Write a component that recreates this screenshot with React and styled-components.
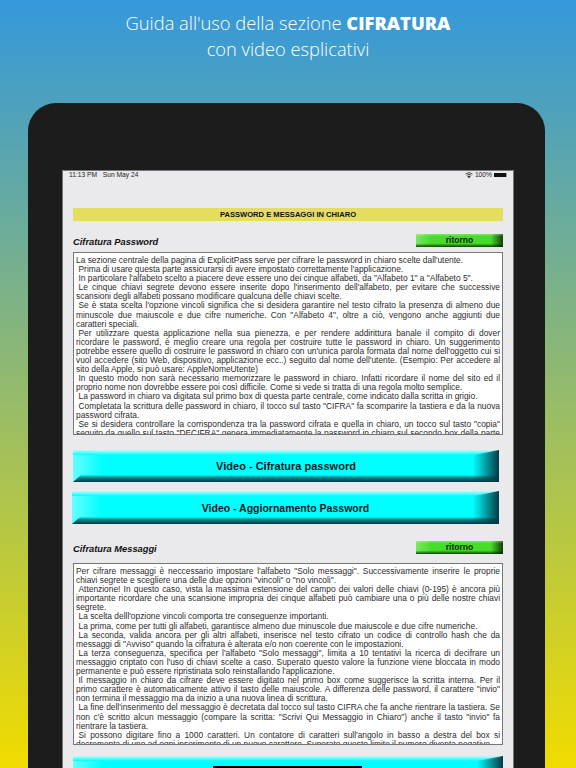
import React from 'react'
import styled, { createGlobalStyle } from 'styled-components'

const Global = createGlobalStyle`
  html, body { margin: 0; padding: 0; }
  body { font-family: "Liberation Sans", Arial, sans-serif; }
`
const Page = styled.div`
  position: relative;
  width: 576px;
  height: 768px;
  overflow: hidden;
  display: flex;
  flex-direction: column;
  background: linear-gradient(to bottom, #3498db 0%, #f1dc00 100%);
`
const Headline = styled.h1`
  margin: 0;
  padding-top: 10px;
  height: 103px;
  box-sizing: border-box;
  text-align: center;
  color: #fff;
  font-family: "Open Sans", sans-serif;
  font-weight: 300;
  font-size: 18.3px;
  line-height: 26px;
  b { font-weight: 800; }
`
const Device = styled.div`
  flex: 1;
  min-height: 0;
  margin: 0 31px 0 28px;
  padding: 67px 31px 0 34px;
  background: #1c1c1c;
  border-radius: 28px 28px 0 0;
`
const Screen = styled.div`
  height: 100%;
  box-sizing: border-box;
  background: #eaeaec;
  border: 1px solid #77777a;
  border-bottom: 0;
  padding: 0 10px 0 10px;
  overflow: hidden;
`
const StatusBar = styled.div`
  display: flex;
  justify-content: space-between;
  align-items: center;
  height: 7px;
  margin: 0 -4px 0 -4px;
  font-size: 6.7px;
  color: #222;
`
const StatusRight = styled.div`
  display: flex;
  align-items: center;
  gap: 2px;
`
const Battery = styled.span`
  width: 12px;
  height: 4px;
  background: #111;
  border-right: 1px solid #999;
`
const Banner = styled.div`
  margin-top: 30px;
  height: 13px;
  background: #e4dd5e;
  text-align: center;
  font-size: 7.6px;
  font-weight: bold;
  line-height: 14px;
  color: #111;
`
const SectionHead = styled.div`
  display: flex;
  justify-content: space-between;
  align-items: flex-end;
  height: 13px;
  margin-top: ${p => p.$top}px;
  margin-bottom: ${p => p.$bottom}px;
`
const SectionTitle = styled.h2`
  margin: 0 0 -1px;
  font-size: 9.3px;
  font-style: italic;
  font-weight: bold;
  line-height: 12px;
  color: #111;
`
const BackButton = styled.div`
  width: 87px;
  height: 13px;
  text-align: center;
  font-size: 8.6px;
  font-weight: bold;
  line-height: 12px;
  color: #0b2a05;
  background:
    linear-gradient(to bottom, rgba(255,255,255,.3), rgba(255,255,255,0) 20%, rgba(0,0,0,0) 72%, rgba(0,40,0,.85)),
    linear-gradient(to right, #7be85f 0%, #46dc28 18%, #46dc28 86%, #123f0a 100%);
`
const TextBox = styled.div`
  height: ${p => p.$height}px;
  box-sizing: border-box;
  padding: 3px 2px 0 2px;
  overflow: hidden;
  background: #fff;
  border: 1px solid #77777a;
  font-size: 8.4px;
  line-height: 9.1px;
  color: #2c2c2c;
  text-align: justify;
`
const Para = styled.p`
  margin: 0;
  text-indent: ${p => p.$first ? 0 : 2.5}px;
`
const VideoButton = styled.div`
  position: relative;
  height: ${p => p.$height}px;
  margin: ${p => p.$top}px ${p => p.$right}px 0 ${p => p.$left}px;
  display: flex;
  align-items: center;
  justify-content: center;
  font-size: ${p => p.$size}px;
  font-weight: bold;
  color: #06181c;
  overflow: hidden;
  background:
    linear-gradient(to right, rgba(255,255,255,.4), rgba(255,255,255,0) 7%),
    #00ffff;
  &::before {
    content: "";
    position: absolute;
    inset: 0 0 auto 0;
    height: 5px;
    background: linear-gradient(to bottom, #b8ffff, #00ffff);
  }
  &::after {
    content: "";
    position: absolute;
    inset: 0 0 0 auto;
    width: 26px;
    background: linear-gradient(to right, rgba(0,60,70,0), #023a44);
    clip-path: polygon(100% 0, 100% 100%, 0 100%, 0 5px);
  }
`
const BottomEdge = styled.span`
  position: absolute;
  inset: auto 0 0 0;
  height: 7px;
  background: linear-gradient(to bottom, #00ffff, #00878c 35%, #023a44);
  clip-path: polygon(8px 0, 100% 0, 100% 100%, 0 100%);
`
const Label = styled.span`
  position: relative;
  z-index: 1;
`
const HomeBar = styled.span`
  position: absolute;
  left: 213px;
  bottom: 0;
  width: 149px;
  height: 2px;
  background: #000;
`

const cifratura = [
  "La sezione centrale della pagina di ExplicitPass serve per cifrare le password in chiaro scelte dall'utente.",
  "Prima di usare questa parte assicurarsi di avere impostato correttamente l'applicazione.",
  "In particolare l'alfabeto scelto a piacere deve essere uno dei cinque alfabeti, da \"Alfabeto 1\" a \"Alfabeto 5\".",
  "Le cinque chiavi segrete devono essere inserite dopo l'inserimento dell'alfabeto, per evitare che successive scansioni degli alfabeti possano modificare qualcuna delle chiavi scelte.",
  "Se è stata scelta l'opzione vincoli significa che si desidera garantire nel testo cifrato la presenza di almeno due minuscole due maiuscole e due cifre numeriche. Con \"Alfabeto 4\", oltre a ciò, vengono anche aggiunti due caratteri speciali.",
  "Per utilizzare questa applicazione nella sua pienezza, e per rendere addirittura banale il compito di dover ricordare le password, è meglio creare una regola per costruire tutte le password in chiaro. Un suggerimento potrebbe essere quello di costruire le password in chiaro con un'unica parola formata dal nome dell'oggetto cui si vuol accedere (sito Web, dispositivo, applicazione ecc..) seguito dal nome dell'utente. (Esempio: Per accedere al sito della Apple, si può usare: AppleNomeUtente)",
  "In questo modo non sarà necessario memorizzare le password in chiaro. Infatti ricordare il nome del sito ed il proprio nome non dovrebbe essere poi così difficile. Come si vede si tratta di una regola molto semplice.",
  "La password in chiaro va digitata sul primo box di questa parte centrale, come indicato dalla scritta in grigio.",
  "Completata la scrittura delle password in chiaro, il tocco sul tasto \"CIFRA\" fa scomparire la tastiera e da la nuova password cifrata.",
  "Se si desidera controllare la corrispondenza tra la password cifrata e quella in chiaro, un tocco sul tasto \"copia\" seguito da quello sul tasto \"DECIFRA\" genera immediatamente la password in chiaro sul secondo box della parte centrale.",
]

const messaggi = [
  "Per cifrare messaggi è neccessario impostare l'alfabeto \"Solo messaggi\". Successivamente inserire le proprie chiavi segrete e scegliere una delle due opzioni \"vincoli\" o \"no vincoli\".",
  "Attenzione! In questo caso, vista la massima estensione del campo dei valori delle chiavi (0-195) è ancora più importante ricordare che una scansione impropria dei cinque alfabeti può cambiare una o più delle nostre chiavi segrete.",
  "La scelta delll'opzione vincoli comporta tre conseguenze importanti.",
  "La prima, come per tutti gli alfabeti, garantisce almeno due minuscole due maiuscole e due cifre numeriche.",
  "La seconda, valida ancora per gli altri alfabeti, inserisce nel testo cifrato un codice di controllo hash che da messaggi di \"Avviso\" quando la cifratura è alterata e/o non coerente con le impostazioni.",
  "La terza conseguenza, specifica per l'alfabeto \"Solo messaggi\", limita a 10 tentativi la ricerca di decifrare un messaggio criptato con l'uso di chiavi scelte a caso. Superato questo valore la funzione viene bloccata in modo permanente e può essere ripristinata solo reinstallando l'applicazione.",
  "Il messaggio in chiaro da cifrare deve essere digitato nel primo box come suggerisce la scritta interna. Per il primo carattere è automaticamente attivo il tasto delle maiuscole. A differenza delle password, il carattere \"invio\" non termina il messaggio ma da inizio a una nuova linea di scrittura.",
  "La fine dell'inserimento del messaggio è decretata dal tocco sul tasto CIFRA che fa anche rientrare la tastiera. Se non c'è scritto alcun messaggio (compare la scritta: \"Scrivi Qui Messaggio in Chiaro\") anche il tasto \"invio\" fa rientrare la tastiera.",
  "Si possono digitare fino a 1000 caratteri. Un contatore di caratteri sull'angolo in basso a destra del box si decrementa di uno ad ogni inserimento di un nuovo carattere. Superato questo limite il numero diventa negativo.",
]

const Video = ({ children, height, top, left, right = 4, size = 11 }) => (
  <VideoButton $height={height} $top={top} $left={left} $right={right} $size={size}>
    <BottomEdge />
    <Label>{children}</Label>
  </VideoButton>
)

const App = () => (
  <Page>
    <Global />
    <Headline>
      Guida all'uso della sezione <b>CIFRATURA</b>
      <br />
      con video esplicativi
    </Headline>
    <Device>
      <Screen>
        <StatusBar>
          <span>11:13 PM &nbsp; Sun May 24</span>
          <StatusRight>
            <svg width="8" height="6" viewBox="0 0 16 12" fill="none" stroke="#222" strokeWidth="1.6">
              <path d="M1 4 Q8 -2 15 4" />
              <path d="M3.5 6.5 Q8 2.5 12.5 6.5" />
              <path d="M8 11.5 L5.8 9 Q8 7.4 10.2 9 Z" fill="#222" />
            </svg>
            <span>100%</span>
            <Battery />
          </StatusRight>
        </StatusBar>
        <Banner>PASSWORD E MESSAGGI IN CHIARO</Banner>
        <SectionHead $top={13} $bottom={5}>
          <SectionTitle>Cifratura Password</SectionTitle>
          <BackButton>ritorno</BackButton>
        </SectionHead>
        <TextBox $height={183}>
          {cifratura.map((t, i) => <Para key={i} $first={i === 0}>{t}</Para>)}
        </TextBox>
        <Video height={32} top={15} left={0}>Video - Cifratura password</Video>
        <Video height={33} top={9} left={-1} size={10.5}>Video - Aggiornamento Password</Video>
        <SectionHead $top={17} $bottom={9}>
          <SectionTitle>Cifratura Messaggi</SectionTitle>
          <BackButton>ritorno</BackButton>
        </SectionHead>
        <TextBox $height={182}>
          {messaggi.map((t, i) => <Para key={i} $first={i === 0}>{t}</Para>)}
        </TextBox>
        <Video height={33} top={11} left={0} right={0}></Video>
      </Screen>
    </Device>
    <HomeBar />
  </Page>
)

export default App
